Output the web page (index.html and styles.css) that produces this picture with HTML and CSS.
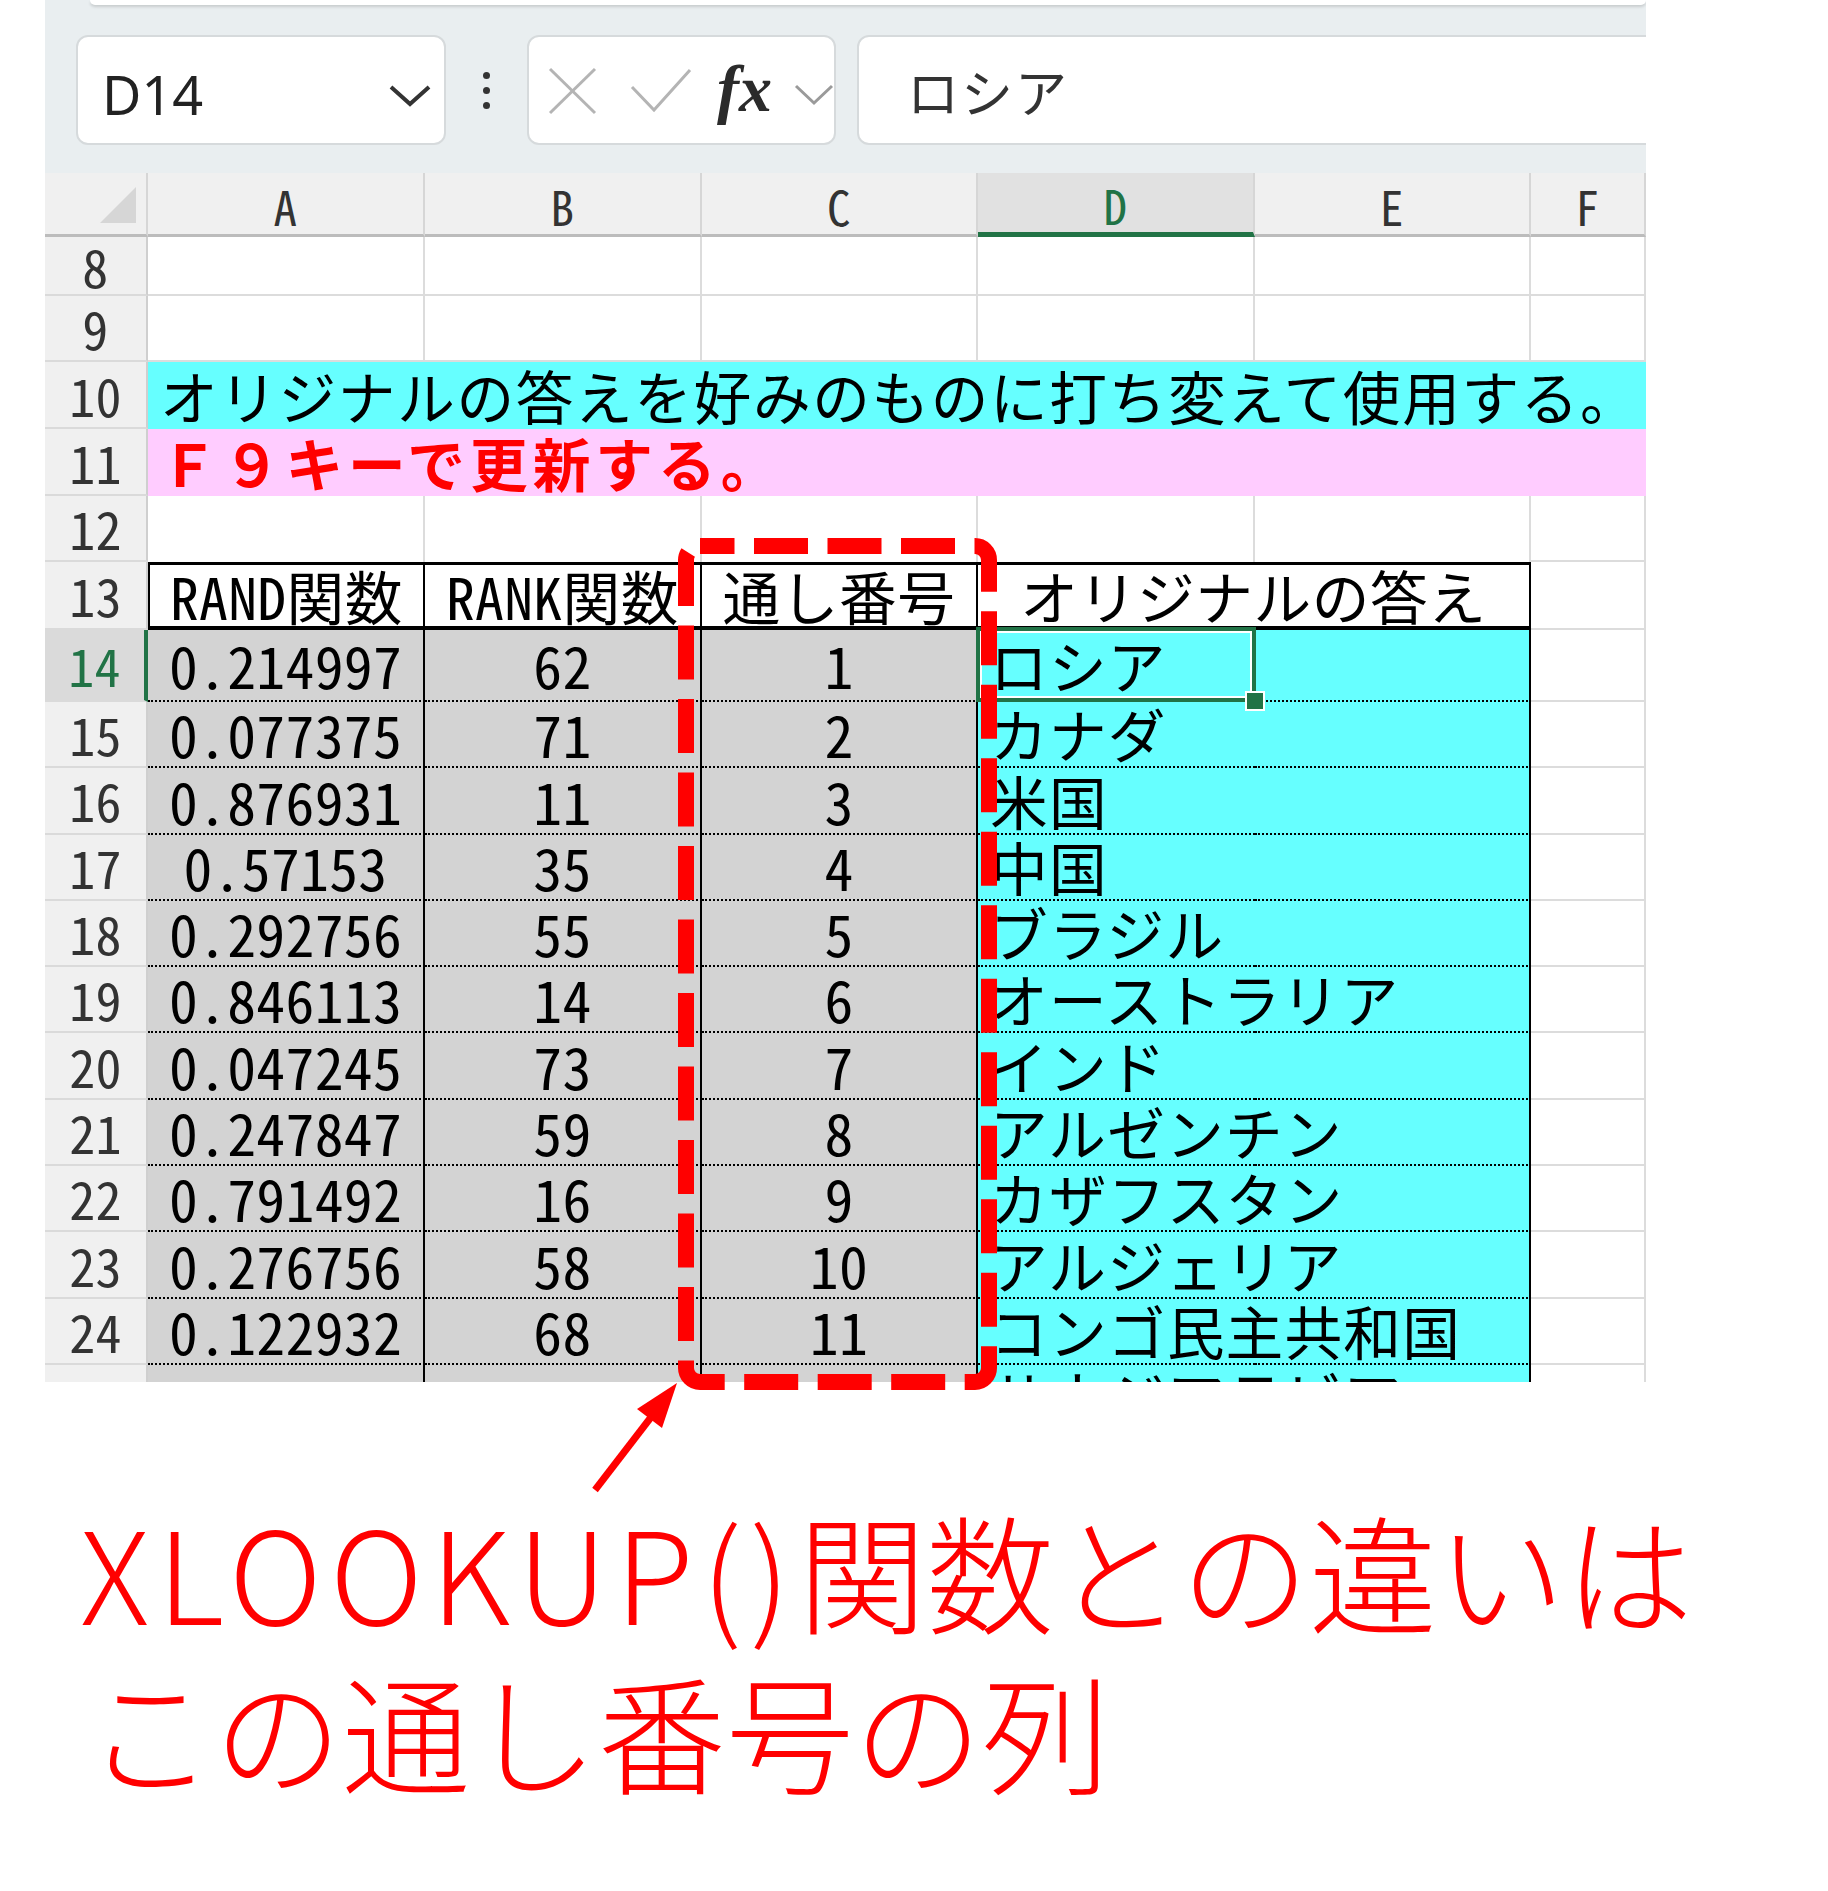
FILE: index.html
```html
<!DOCTYPE html>
<html lang="ja">
<head>
<meta charset="utf-8">
<title>Excel 通し番号</title>
<link rel="stylesheet" href="styles.css">
</head>
<body>
<div class="excel">
  <div class="ribbon"></div>
  <div class="fbar">
    <div class="namebox">
      <span class="ref">D14</span>
      <svg class="chev" width="44" height="24" viewBox="0 0 44 24"><polyline points="3,4 22,21 41,4" fill="none" stroke="#333" stroke-width="4"/></svg>
    </div>
    <div class="dots"><i></i><i></i><i></i></div>
    <div class="fxbox">
      <svg width="305" height="106" viewBox="0 0 305 106">
        <g fill="none" stroke="#b4b4b4" stroke-width="3">
          <line x1="21" y1="32" x2="66" y2="76"/>
          <line x1="66" y1="32" x2="21" y2="76"/>
          <polyline points="103,50 125,73 161,33"/>
        </g>
        <text x="188" y="74" class="fx">fx</text>
        <polyline points="267,49 285,66 303,49" fill="none" stroke="#9a9a9a" stroke-width="3"/>
      </svg>
    </div>
    <div class="formula">ロシア</div>
  </div>

  <div class="sheet">
    <!-- column headers -->
    <div class="corner"><svg width="103" height="61" viewBox="0 0 103 61"><polygon points="91,14 91,50 55,50" fill="#d6d6d6"/></svg></div>
    <div class="ch hw">A</div>
    <div class="ch hw">B</div>
    <div class="ch hw">C</div>
    <div class="ch sel hw">D</div>
    <div class="ch hw">E</div>
    <div class="ch hw">F</div>

    <!-- row 8 -->
    <div class="rh hw">8</div>
    <div class="c"></div><div class="c"></div><div class="c"></div><div class="c"></div><div class="c"></div><div class="c"></div>
    <!-- row 9 -->
    <div class="rh hw">9</div>
    <div class="c"></div><div class="c"></div><div class="c"></div><div class="c"></div><div class="c"></div><div class="c"></div>
    <!-- row 10 -->
    <div class="rh hw">10</div>
    <div class="band cyan">オリジナルの答えを好みのものに打ち変えて使用する。</div>
    <!-- row 11 -->
    <div class="rh hw">11</div>
    <div class="band pink">Ｆ９キーで更新する。</div>
    <!-- row 12 -->
    <div class="rh hw">12</div>
    <div class="c nb"></div><div class="c nb"></div><div class="c nb"></div><div class="c nb"></div><div class="c nb"></div><div class="c"></div>
    <!-- row 13 -->
    <div class="rh hw">13</div>
    <div class="th first"><span class="hw">RAND</span>関数</div>
    <div class="th"><span class="hw">RANK</span>関数</div>
    <div class="th">通し番号</div>
    <div class="th wide">オリジナルの答え</div>
    <div class="c"></div>

    <!-- row 14 -->
    <div class="rh sel hw">14</div>
    <div class="g hw">0.214997</div><div class="g hw">62</div><div class="g hw">1</div>
    <div class="cy active"><span>ロシア</span><div class="selbox"><b class="handle"></b></div></div><div class="cy e"></div><div class="c"></div>
    <!-- row 15 -->
    <div class="rh hw">15</div>
    <div class="g hw">0.077375</div><div class="g hw">71</div><div class="g hw">2</div>
    <div class="cy">カナダ</div><div class="cy e"></div><div class="c"></div>
    <!-- row 16 -->
    <div class="rh hw">16</div>
    <div class="g hw">0.876931</div><div class="g hw">11</div><div class="g hw">3</div>
    <div class="cy">米国</div><div class="cy e"></div><div class="c"></div>
    <!-- row 17 -->
    <div class="rh hw">17</div>
    <div class="g hw">0.57153</div><div class="g hw">35</div><div class="g hw">4</div>
    <div class="cy">中国</div><div class="cy e"></div><div class="c"></div>
    <!-- row 18 -->
    <div class="rh hw">18</div>
    <div class="g hw">0.292756</div><div class="g hw">55</div><div class="g hw">5</div>
    <div class="cy">ブラジル</div><div class="cy e"></div><div class="c"></div>
    <!-- row 19 -->
    <div class="rh hw">19</div>
    <div class="g hw">0.846113</div><div class="g hw">14</div><div class="g hw">6</div>
    <div class="cy">オーストラリア</div><div class="cy e"></div><div class="c"></div>
    <!-- row 20 -->
    <div class="rh hw">20</div>
    <div class="g hw">0.047245</div><div class="g hw">73</div><div class="g hw">7</div>
    <div class="cy">インド</div><div class="cy e"></div><div class="c"></div>
    <!-- row 21 -->
    <div class="rh hw">21</div>
    <div class="g hw">0.247847</div><div class="g hw">59</div><div class="g hw">8</div>
    <div class="cy">アルゼンチン</div><div class="cy e"></div><div class="c"></div>
    <!-- row 22 -->
    <div class="rh hw">22</div>
    <div class="g hw">0.791492</div><div class="g hw">16</div><div class="g hw">9</div>
    <div class="cy">カザフスタン</div><div class="cy e"></div><div class="c"></div>
    <!-- row 23 -->
    <div class="rh hw">23</div>
    <div class="g hw">0.276756</div><div class="g hw">58</div><div class="g hw">10</div>
    <div class="cy">アルジェリア</div><div class="cy e"></div><div class="c"></div>
    <!-- row 24 -->
    <div class="rh hw">24</div>
    <div class="g hw">0.122932</div><div class="g hw">68</div><div class="g hw">11</div>
    <div class="cy">コンゴ民主共和国</div><div class="cy e"></div><div class="c"></div>
    <!-- row 25 (cut off at the window edge) -->
    <div class="rh"></div>
    <div class="g"></div><div class="g"></div><div class="g"></div>
    <div class="cy">サウジアラビア</div><div class="cy e"></div><div class="c"></div>
  </div>
</div>

<div class="note">
  <p class="l1"><span class="lat">XLOOKUP()</span>関数との違いは</p>
  <p class="l2">この通し番号の列</p>
</div>

<svg class="overlay" width="1828" height="1891" viewBox="0 0 1828 1891">
  <rect x="686" y="546" width="303" height="836" rx="14" ry="14" fill="none" stroke="#ff0000" stroke-width="16" stroke-dasharray="54 19.5" stroke-dashoffset="19.5"/>
  <line x1="595" y1="1490" x2="655" y2="1412" stroke="#ff0000" stroke-width="7"/>
  <polygon points="677,1383 662,1428 637,1409" fill="#ff0000"/>
</svg>
</body>
</html>
```
FILE: styles.css
```css
* { box-sizing: border-box; margin: 0; padding: 0; }

body {
  width: 1828px;
  height: 1891px;
  background: #ffffff;
  font-family: "Noto Sans CJK JP", "Noto Sans", sans-serif;
  position: relative;
  overflow: hidden;
}

.hw { font-feature-settings: "hwid" 1; letter-spacing: 0.3px; }

.excel {
  margin-left: 45px;
  width: 1601px;
  height: 1382px;
  overflow: hidden;
  background: #e9eef0;
}

.ribbon {
  margin-left: 45px;
  height: 5px;
  background: #ffffff;
  border-radius: 0 0 8px 8px;
  box-shadow: 0 2px 3px rgba(0, 0, 0, 0.14);
}

.fbar {
  display: flex;
  height: 110px;
  margin-top: 30px;
  padding-left: 31px;
}

.namebox {
  flex: 0 0 370px;
  background: #fff;
  border: 2px solid #d6dadc;
  border-radius: 12px;
  display: flex;
  align-items: center;
  justify-content: space-between;
  padding: 0 12px 0 24px;
}
.namebox .ref {
  font-family: "Noto Sans", sans-serif;
  font-size: 54px;
  color: #222;
  line-height: 1;
  margin-top: 8px;
}
.namebox .chev { margin-top: 10px; }

.dots {
  flex: 0 0 81px;
  display: flex;
  flex-direction: column;
  align-items: center;
  justify-content: center;
  gap: 8px;
}
.dots i {
  display: block;
  width: 7px;
  height: 7px;
  border-radius: 50%;
  background: #333;
}

.fxbox {
  flex: 0 0 309px;
  background: #fff;
  border: 2px solid #d6dadc;
  border-radius: 12px;
}
.fxbox svg { display: block; }
.fx {
  font-family: "Liberation Serif", serif;
  font-style: italic;
  font-weight: 700;
  font-size: 66px;
  fill: #2b2b2b;
}

.formula {
  margin-left: 21px;
  flex: 0 0 900px;
  background: #fff;
  border: 2px solid #d6dadc;
  border-radius: 12px;
  padding-left: 48px;
  display: flex;
  align-items: center;
  font-size: 52px;
  color: #333;
  letter-spacing: 2px;
}

/* ---------- sheet grid ---------- */
.sheet {
  margin-top: 28px;
  display: grid;
  grid-template-columns: 103px 277px 277px 276px 277px 276px 115px;
  grid-template-rows: 64px 59px 66px 67px 67px 66px 68px 72px repeat(12, 66.3px);
  background: #fff;
  color: #000;
  line-height: 1;
}

.corner {
  background: #f0f0f0;
  border-bottom: 3px solid #bcbcbc;
  border-right: 2px solid #d6d6d6;
}
.corner svg { display: block; }

.ch {
  background: #f0f0f0;
  border-right: 2px solid #d6d6d6;
  border-bottom: 3px solid #bcbcbc;
  display: flex;
  align-items: center;
  justify-content: center;
  font-size: 47px;
  color: #333;
  padding-top: 4px;
}
.ch.sel {
  background: #e1e1e1;
  color: #217346;
  border-bottom: 5px solid #217346;
}

.rh {
  background: #f0f0f0;
  border-bottom: 2px solid #dadada;
  border-right: 2px solid #cfcfcf;
  display: flex;
  align-items: center;
  justify-content: center;
  font-size: 52px;
  color: #333;
}
.rh.sel {
  background: #dadada;
  color: #217346;
  border-right: 4px solid #217346;
}

.c {
  background: #fff;
  border-right: 2px solid #dcdcdc;
  border-bottom: 2px solid #dcdcdc;
}
.c.nb { border-bottom: none; }

.band {
  grid-column: span 6;
  display: flex;
  align-items: center;
  padding-left: 12px;
  font-size: 57.7px;
  white-space: nowrap;
}
.band.cyan { background: #66ffff; color: #000; letter-spacing: 1.6px; }
.band.pink { background: #ffccff; color: #ff0000; font-weight: 700; letter-spacing: 5px; }

.th {
  background: #fff;
  border-top: 3px solid #000;
  border-bottom: 4px solid #000;
  border-right: 2px solid #000;
  display: flex;
  align-items: center;
  justify-content: center;
  font-size: 57.7px;
  white-space: nowrap;
  letter-spacing: 0.6px;
}
.th.first { border-left: 2px solid #000; }
.th.wide { grid-column: span 2; }

.g {
  background: #d3d3d3;
  border-bottom: 2px dotted #000;
  border-right: 2px solid #000;
  display: flex;
  align-items: center;
  justify-content: center;
  font-size: 57.7px;
  white-space: nowrap;
}

.cy {
  background: #66ffff;
  border-bottom: 2px dotted #000;
  display: flex;
  align-items: center;
  padding-left: 12px;
  font-size: 57.7px;
  letter-spacing: 1.2px;
  white-space: nowrap;
  position: relative;
  z-index: 1;
}
.cy.active { z-index: 2; }
.cy.e { border-right: 2px solid #000; z-index: 0; }

.selbox {
  position: absolute;
  left: -2px;
  top: -3px;
  right: -1px;
  bottom: -2px;
  border: 4px solid #217346;
  box-shadow: inset 0 0 0 2px #fff;
}
.handle {
  position: absolute;
  right: -13px;
  bottom: -13px;
  width: 20px;
  height: 20px;
  background: #217346;
  border: 2px solid #fff;
}

/* ---------- annotation ---------- */
.note {
  margin-top: 108px;
  padding-left: 80px;
  color: #ff0000;
  font-size: 128px;
  font-weight: 300;
  line-height: 160px;
  white-space: nowrap;
}
.note .lat { letter-spacing: 8px; }
.note .l2 { padding-left: 6px; }

.overlay {
  position: absolute;
  left: 0;
  top: 0;
  z-index: 5;
  pointer-events: none;
}
```
